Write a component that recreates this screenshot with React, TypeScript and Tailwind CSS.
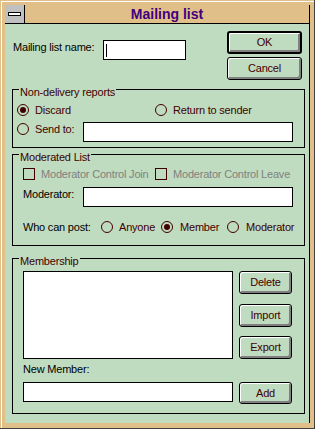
import React from "react";

const Radio = ({ checked }: { checked?: boolean }) => (
  <span className="w-[12px] h-[12px] rounded-full border border-[#400000] flex items-center justify-center shrink-0">
    {checked && <span className="w-[6px] h-[6px] rounded-full bg-[#400000]" />}
  </span>
);

const Check = () => <span className="w-[12px] h-[12px] border border-[#400000] shrink-0" />;

const Btn = ({ label, def, cls }: { label: string; def?: boolean; cls?: string }) => (
  <div
    className={
      (def ? "border-2 " : "border ") +
      "border-black rounded-[3px] flex items-center justify-center text-[#400000] shadow-[inset_1px_1px_0_#ffffff,inset_-2px_-2px_0_#808080] " +
      (cls || "")
    }
  >
    {label}
  </div>
);

const Legend = ({ text }: { text: string }) => (
  <div className="flex">
    <span className="-mt-[4px] ml-[6px] px-[1px] bg-[#c0dcc0] text-[#400000]">{text}</span>
  </div>
);

export default function App() {
  return (
    <div className="w-[315px] h-[429px] bg-[#e0c088] border-r border-b border-[#404040] pt-[1px] pl-[1px] font-['Liberation_Sans',Arial,sans-serif] text-[11px] leading-[13px] tracking-[-0.2px]">
      <div className="h-full border-t border-l border-white pt-[3px] pl-[3px]">
        <div className="w-[305px] h-[418px] border-r border-black flex flex-col">
          {/* title bar */}
          <div className="h-[19px] border-b border-black flex shrink-0">
            <div className="w-[20px] h-full bg-[#c0c0c0] border-r border-black pl-[3px] pt-[7px]">
              <div className="w-[13px] h-[4px] bg-white border border-black" />
            </div>
            <div className="flex-1 text-center font-bold text-[14px] leading-[18px] tracking-normal text-[#400080]">
              Mailing list
            </div>
          </div>
          {/* client */}
          <div className="flex-1 bg-[#c0dcc0] flex flex-col">
            <div className="flex items-start pl-[8px]">
              <span className="w-[90px] mt-[17px] text-black">Mailing list name:</span>
              <div className="w-[83px] h-[20px] mt-[16px] border border-black bg-white pl-[2px] pt-[3px]">
                <div className="w-px h-[13px] bg-black" />
              </div>
              <div className="ml-auto mr-[7px] mt-[7px] flex flex-col gap-[3px] w-[75px]">
                <Btn label="OK" def cls="h-[23px]" />
                <Btn label="Cancel" cls="h-[23px]" />
              </div>
            </div>

            {/* Non-delivery reports */}
            <div className="mt-[9px] ml-[7px] mr-[4px] border border-black pb-[5px]">
              <Legend text="Non-delivery reports" />
              <div className="flex items-center h-[12px] mt-[5px] pl-[4px] text-[#400000]">
                <div className="w-[138px] flex items-center gap-[6px]">
                  <Radio checked />
                  <span>Discard</span>
                </div>
                <div className="flex items-center gap-[6px]">
                  <Radio />
                  <span>Return to sender</span>
                </div>
              </div>
              <div className="flex items-start mt-[6px] pl-[4px] text-[#400000]">
                <div className="mt-[1px]">
                  <Radio />
                </div>
                <span className="w-[48px] ml-[6px] mt-[1px]">Send to:</span>
                <div className="w-[210px] h-[20px] border border-black bg-white" />
              </div>
            </div>

            {/* Moderated List */}
            <div className="mt-[6px] ml-[7px] mr-[4px] border border-black pb-[12px]">
              <Legend text="Moderated List" />
              <div className="flex items-center h-[12px] mt-[4px] pl-[10px] text-[#808080]">
                <div className="w-[132px] flex items-center gap-[6px]">
                  <Check />
                  <span>Moderator Control Join</span>
                </div>
                <div className="flex items-center gap-[6px]">
                  <Check />
                  <span>Moderator Control Leave</span>
                </div>
              </div>
              <div className="flex items-start mt-[7px] pl-[10px]">
                <span className="w-[60px] mt-[1px] text-black">Moderator:</span>
                <div className="w-[210px] h-[20px] border border-black bg-white" />
              </div>
              <div className="flex items-center h-[12px] mt-[14px] pl-[10px] text-[#400000]">
                <span className="w-[78px] text-black">Who can post:</span>
                <div className="w-[60px] flex items-center gap-[6px]">
                  <Radio />
                  <span>Anyone</span>
                </div>
                <div className="w-[66px] flex items-center gap-[7px]">
                  <Radio checked />
                  <span>Member</span>
                </div>
                <div className="flex items-center gap-[7px]">
                  <Radio />
                  <span>Moderator</span>
                </div>
              </div>
            </div>

            {/* Membership */}
            <div className="mt-[12px] ml-[7px] mr-[4px] border border-black pb-[9px]">
              <Legend text="Membership" />
              <div className="flex items-start mt-[3px] pl-[10px]">
                <div className="w-[210px] h-[88px] border border-black bg-white" />
                <div className="ml-[6px] w-[53px] flex flex-col">
                  <Btn label="Delete" cls="h-[23px]" />
                  <Btn label="Import" cls="h-[23px] mt-[10px]" />
                  <Btn label="Export" cls="h-[23px] mt-[9px]" />
                </div>
              </div>
              <div className="mt-[4px] pl-[10px] text-black">New Member:</div>
              <div className="flex items-start mt-[6px] pl-[10px]">
                <div className="w-[210px] h-[20px] border border-black bg-white" />
                <Btn label="Add" cls="ml-[6px] w-[53px] h-[22px]" />
              </div>
            </div>
          </div>
        </div>
      </div>
    </div>
  );
}
